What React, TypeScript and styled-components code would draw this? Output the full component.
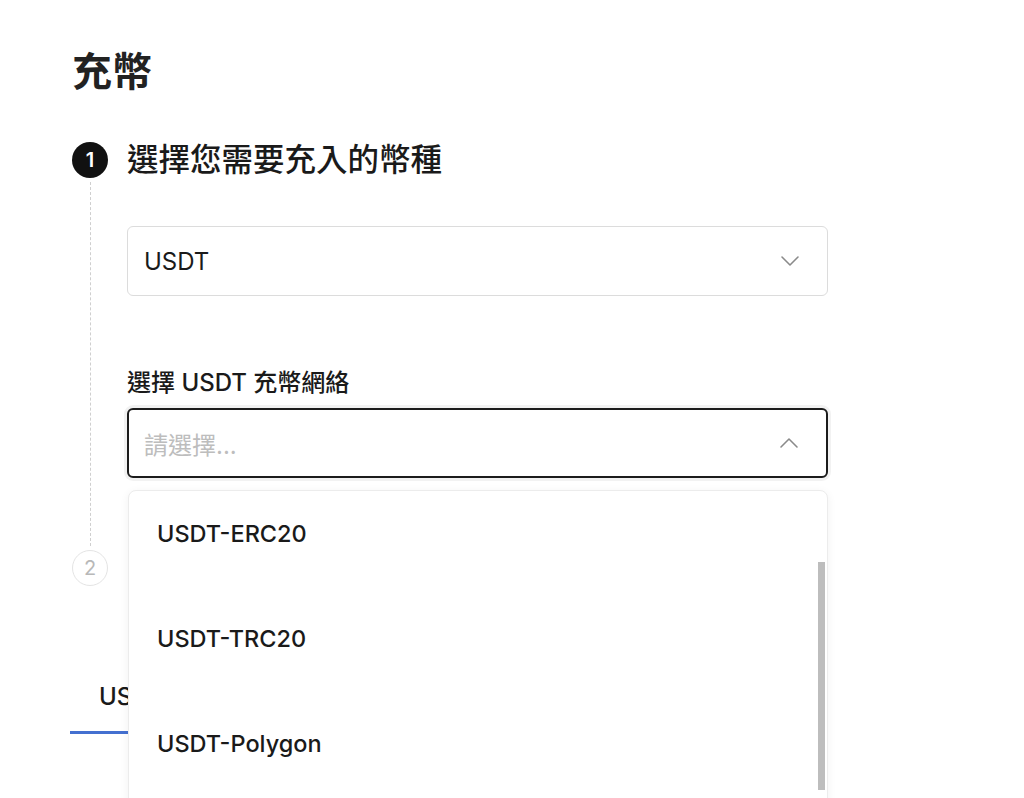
import React from "react";
import styled, { createGlobalStyle } from "styled-components";

const GlobalStyle = createGlobalStyle`
  html, body {
    margin: 0;
    padding: 0;
    background: #ffffff;
  }
  body {
    font-family: "Inter", "Noto Sans CJK TC", sans-serif;
    color: #1a1a1a;
  }
`;

const Page = styled.div`
  height: 798px;
  overflow: hidden;
  padding: 48px 0 0 72px;
  box-sizing: border-box;
`;

const Title = styled.h1`
  margin: 0;
  font-size: 40px;
  line-height: 48px;
  font-weight: 700;
  color: #222222;
`;

const Steps = styled.div`
  margin-top: 46px;
  width: 756px;
  display: flex;
  flex-direction: column;
`;

const Step = styled.div`
  display: flex;
  column-gap: 19px;
`;

const Indicator = styled.div`
  width: 36px;
  display: flex;
  flex-direction: column;
  align-items: center;
  flex-shrink: 0;
`;

const Circle = styled.div<{ $active?: boolean }>`
  width: 36px;
  height: 36px;
  border-radius: 50%;
  box-sizing: border-box;
  display: flex;
  align-items: center;
  justify-content: center;
  font-size: 20px;
  font-weight: ${(p) => (p.$active ? 600 : 400)};
  background: ${(p) => (p.$active ? "#111111" : "#ffffff")};
  color: ${(p) => (p.$active ? "#ffffff" : "#b8b8b8")};
  border: ${(p) => (p.$active ? "none" : "1.5px solid #e4e4e4")};
`;

const DashLine = styled.div`
  flex: 1;
  width: 0;
  margin: 4px 0;
  border-left: 1px dashed #cfcfcf;
`;

const StepBody = styled.div<{ $last?: boolean }>`
  flex: 1;
  padding-bottom: ${(p) => (p.$last ? 0 : 72)}px;
`;

const StepTitle = styled.div`
  font-size: 31.5px;
  line-height: 36px;
  font-weight: 500;
  color: #1a1a1a;
`;

const Field = styled.div`
  position: relative;
`;

const Select = styled.div<{ $open?: boolean }>`
  height: 70px;
  box-sizing: border-box;
  border-radius: 6px;
  border: ${(p) => (p.$open ? "2px solid #1c1c1c" : "1px solid #dcdcdc")};
  box-shadow: ${(p) => (p.$open ? "0 0 0 3px rgba(0,0,0,0.05)" : "none")};
  padding: 0 27px 0 ${(p) => (p.$open ? 15 : 16)}px;
  display: flex;
  align-items: center;
  justify-content: space-between;
  background: #ffffff;
`;

const SelectText = styled.span<{ $placeholder?: boolean }>`
  font-size: 24px;
  color: ${(p) => (p.$placeholder ? "#bdbdbd" : "#1a1a1a")};
`;

const FirstSelect = styled.div`
  margin-top: 48px;
`;

const FieldLabel = styled.div`
  margin-top: 71px;
  margin-bottom: 9px;
  font-size: 24px;
  line-height: 32px;
  font-weight: 500;
  color: #1a1a1a;
`;

const Menu = styled.div`
  position: absolute;
  top: calc(100% + 12px);
  left: 1px;
  right: 0;
  height: 340px;
  overflow: hidden;
  background: #ffffff;
  border: 1px solid #ececec;
  border-radius: 8px;
  box-shadow: 0 2px 10px rgba(0, 0, 0, 0.06);
  z-index: 10;
`;

const MenuList = styled.div`
  margin-top: -10px;
`;

const MenuItem = styled.div`
  height: 105px;
  display: flex;
  align-items: center;
  padding-left: 28px;
  font-size: 23.5px;
  font-weight: 500;
  color: #1a1a1a;
`;

const ScrollThumb = styled.div`
  position: absolute;
  right: 2px;
  top: 71px;
  width: 7px;
  height: 228px;
  background: #bdbdbd;
`;

const Tabs = styled.div`
  margin-top: 95px;
  margin-left: -2px;
  display: flex;
`;

const Tab = styled.div<{ $active?: boolean }>`
  padding: 0 29px 18px;
  font-size: 24px;
  line-height: 32px;
  font-weight: 500;
  color: #1a1a1a;
  border-bottom: 3px solid ${(p) => (p.$active ? "#4470d0" : "transparent")};
`;

function Chevron({ up }: { up?: boolean }) {
  return (
    <svg width="20" height="12" viewBox="0 0 20 12" fill="none">
      <polyline
        points={up ? "2,10 10,2 18,10" : "2,2 10,10 18,2"}
        stroke="#8a8a8a"
        strokeWidth="1.6"
        strokeLinecap="round"
        strokeLinejoin="round"
      />
    </svg>
  );
}

const networks = ["USDT-ERC20", "USDT-TRC20", "USDT-Polygon"];

export default function App() {
  return (
    <>
      <GlobalStyle />
      <Page>
        <Title>充幣</Title>
        <Steps>
          <Step>
            <Indicator>
              <Circle $active>1</Circle>
              <DashLine />
            </Indicator>
            <StepBody>
              <StepTitle>選擇您需要充入的幣種</StepTitle>
              <FirstSelect>
                <Select>
                  <SelectText>USDT</SelectText>
                  <Chevron />
                </Select>
              </FirstSelect>
              <FieldLabel>選擇 USDT 充幣網絡</FieldLabel>
              <Field>
                <Select $open>
                  <SelectText $placeholder>請選擇...</SelectText>
                  <Chevron up />
                </Select>
                <Menu>
                  <MenuList>
                    {networks.map((n) => (
                      <MenuItem key={n}>{n}</MenuItem>
                    ))}
                  </MenuList>
                  <ScrollThumb />
                </Menu>
              </Field>
            </StepBody>
          </Step>
          <Step>
            <Indicator>
              <Circle>2</Circle>
            </Indicator>
            <StepBody $last />
          </Step>
        </Steps>
        <Tabs>
          <Tab $active>USDT</Tab>
        </Tabs>
      </Page>
    </>
  );
}
